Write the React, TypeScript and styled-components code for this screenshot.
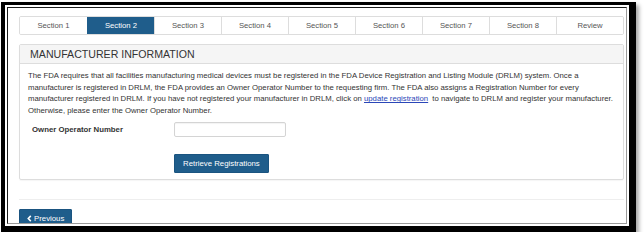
import * as React from "react";
import styled, { createGlobalStyle } from "styled-components";

const GlobalStyle = createGlobalStyle`
    html, body {
        margin: 0;
        padding: 0;
        background: #ffffff;
    }
    body {
        font-family: "Liberation Sans", Arial, sans-serif;
        color: #333333;
    }
`;

// Screenshot frame (black picture border with drop shadow)
const Frame = styled.div`
    box-sizing: border-box;
    width: 635px;
    height: 230px;
    margin: 2px 0 0 1px;
    padding: 2px;
    background: #ffffff;
    border-style: solid;
    border-color: #000000;
    border-width: 3px 7px 6px 4px;
    box-shadow: 3px 3px 4px rgba(0, 0, 0, 0.35);
`;

const Inner = styled.div`
    box-sizing: border-box;
    height: 100%;
    border: 1px solid #1a1a1a;
    border-right-color: #9a9a9a;
    border-bottom-color: #9a9a9a;
    overflow: hidden;
`;

const Page = styled.div`
    padding: 8px 2px 0 11px;
`;

const TabBar = styled.div`
    display: grid;
    grid-template-columns: repeat(9, 1fr);
    height: 19px;
    box-sizing: border-box;
    border: 1px solid #dddddd;
    border-radius: 2px;
    overflow: hidden;
`;

const Tab = styled.div<{ $active?: boolean }>`
    display: flex;
    align-items: center;
    justify-content: center;
    font-size: 7.7px;
    color: ${(p) => (p.$active ? "#ffffff" : "#555555")};
    background: ${(p) => (p.$active ? "#1f5d8b" : "#ffffff")};
    border-left: 1px solid ${(p) => (p.$active ? "#1f5d8b" : "#dddddd")};
    &:first-child {
        border-left: none;
    }
`;

const Panel = styled.div`
    margin-top: 9px;
    border: 1px solid #dddddd;
    border-radius: 2px;
    box-shadow: 0 1px 1px rgba(0, 0, 0, 0.04);
`;

const PanelHeader = styled.div`
    height: 18px;
    padding: 0 10px;
    background: #f5f5f5;
    border-bottom: 1px solid #dddddd;
    display: flex;
    align-items: center;
`;

const PanelTitle = styled.h3`
    margin: 0;
    font-size: 10.6px;
    font-weight: normal;
    color: #333333;
`;

const PanelBody = styled.div`
    padding: 6px 8px 6px 8px;
`;

const Intro = styled.p`
    margin: 0 0 5.6px;
    font-size: 7.75px;
    line-height: 11.6px;
    color: #333333;
    white-space: nowrap;
`;

const Link = styled.a`
    color: #2b47b8;
    text-decoration: underline;
    margin-right: 2px;
`;

const FormRow = styled.div`
    display: flex;
    align-items: center;
    padding-left: 4px;
    height: 15px;
`;

const Label = styled.label`
    width: 142px;
    font-size: 7.8px;
    font-weight: bold;
    color: #333333;
`;

const TextInput = styled.input`
    box-sizing: border-box;
    width: 112px;
    height: 15px;
    border: 1px solid #d4d4d4;
    border-radius: 2px;
    padding: 0 4px;
    font-size: 8px;
    box-shadow: inset 0 1px 1px rgba(0, 0, 0, 0.05);
`;

const ButtonRow = styled.div`
    padding-left: 146px;
    margin-top: 17px;
    line-height: 0;
`;

const PrimaryButton = styled.button`
    display: inline-flex;
    align-items: center;
    gap: 2px;
    height: 19px;
    padding: 0 8px;
    border: 1px solid #1a5480;
    border-radius: 1px;
    background: #1f5d8b;
    color: #ffffff;
    font-family: "Liberation Sans", Arial, sans-serif;
    font-size: 7.8px;
    line-height: 1;
`;

const BackButton = styled(PrimaryButton)`
    padding: 0 7px;
`;

const Divider = styled.hr`
    margin: 19px 0 0;
    border: none;
    border-top: 1px solid #eeeeee;
`;

const Footer = styled.div`
    padding-top: 9px;
    line-height: 0;
`;

function Chevron(): JSX.Element {
    return (
        <svg width="5" height="7" viewBox="0 0 5 7">
            <polyline points="3.8,0.9 1.3,3.5 3.8,6.1" fill="none" stroke="#ffffff" strokeWidth="1.6" />
        </svg>
    );
}

const sections = ["Section 1", "Section 2", "Section 3", "Section 4", "Section 5", "Section 6", "Section 7", "Section 8", "Review"];

export default function App(): JSX.Element {
    const [ownerNumber, setOwnerNumber] = React.useState("");
    return (
        <>
            <GlobalStyle />
            <Frame>
                <Inner>
                    <Page>
                        <TabBar>
                            {sections.map((name, i) => (
                                <Tab key={name} $active={i === 1}>
                                    {name}
                                </Tab>
                            ))}
                        </TabBar>
                        <Panel>
                            <PanelHeader>
                                <PanelTitle>MANUFACTURER INFORMATION</PanelTitle>
                            </PanelHeader>
                            <PanelBody>
                                <Intro>
                                    The FDA requires that all facilities manufacturing medical devices must be registered in the FDA Device Registration and Listing Module (DRLM) system. Once a
                                    <br />
                                    manufacturer is registered in DRLM, the FDA provides an Owner Operator Number to the requesting firm. The FDA also assigns a Registration Number for every
                                    <br />
                                    manufacturer registered in DRLM. If you have not registered your manufacturer in DRLM, click on <Link href="#">update registration</Link> to navigate to DRLM and register your manufacturer.
                                    <br />
                                    Otherwise, please enter the Owner Operator Number.
                                </Intro>
                                <FormRow>
                                    <Label htmlFor="owner">Owner Operator Number</Label>
                                    <TextInput id="owner" value={ownerNumber} onChange={(e): void => setOwnerNumber(e.target.value)} />
                                </FormRow>
                                <ButtonRow>
                                    <PrimaryButton>Retrieve Registrations</PrimaryButton>
                                </ButtonRow>
                            </PanelBody>
                        </Panel>
                        <Divider />
                        <Footer>
                            <BackButton>
                                <Chevron />
                                Previous
                            </BackButton>
                        </Footer>
                    </Page>
                </Inner>
            </Frame>
        </>
    );
}
